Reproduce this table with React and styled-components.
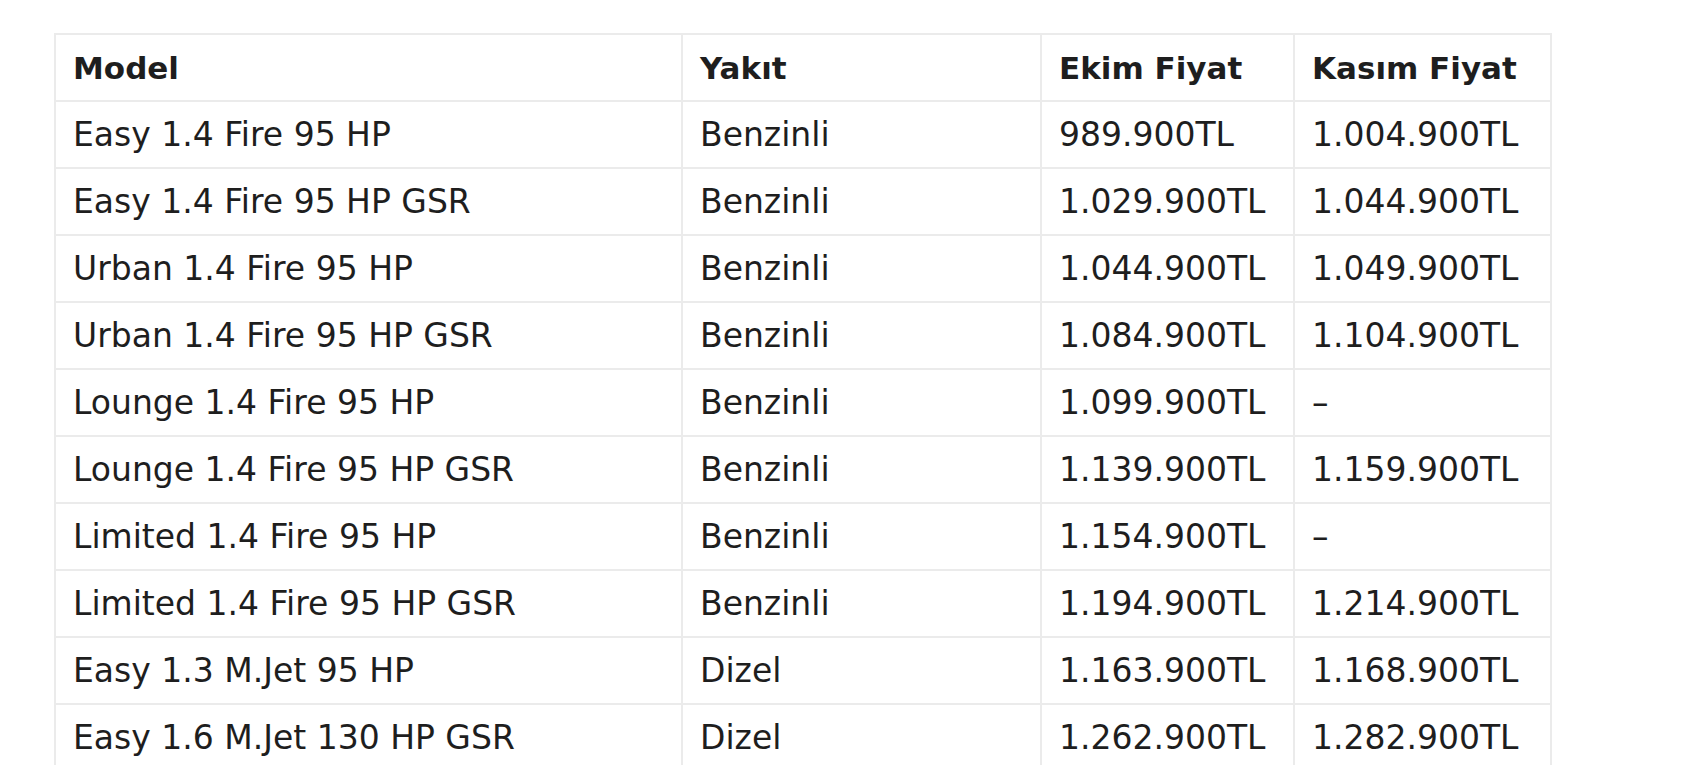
import React from "react";
import styled, { createGlobalStyle } from "styled-components";

const GlobalStyle = createGlobalStyle`
  html, body {
    margin: 0;
    padding: 0;
    background: #ffffff;
  }
  body {
    font-family: "DejaVu Sans", Verdana, sans-serif;
    color: #1e1e1e;
  }
`;

const Page = styled.div`
  padding: 33px 0 0 54px;
`;

const Table = styled.table`
  border-collapse: collapse;
  table-layout: fixed;
  width: 1496px;
  border: 2px solid #ebebeb;
`;

const Col = styled.col`
  width: ${(p) => p.$w}px;
`;

const Row = styled.tr`
  height: 67px;
`;

const HeadCell = styled.th`
  border: 2px solid #ebebeb;
  padding: 0 17px;
  text-align: left;
  font-weight: bold;
  font-size: 31px;
  white-space: nowrap;
  vertical-align: middle;
`;

const Cell = styled.td`
  border: 2px solid #ebebeb;
  padding: 0 17px;
  text-align: left;
  font-size: 33px;
  white-space: nowrap;
  vertical-align: middle;
`;

const rows = [
  ["Easy 1.4 Fire 95 HP", "Benzinli", "989.900TL", "1.004.900TL"],
  ["Easy 1.4 Fire 95 HP GSR", "Benzinli", "1.029.900TL", "1.044.900TL"],
  ["Urban 1.4 Fire 95 HP", "Benzinli", "1.044.900TL", "1.049.900TL"],
  ["Urban 1.4 Fire 95 HP GSR", "Benzinli", "1.084.900TL", "1.104.900TL"],
  ["Lounge 1.4 Fire 95 HP", "Benzinli", "1.099.900TL", "–"],
  ["Lounge 1.4 Fire 95 HP GSR", "Benzinli", "1.139.900TL", "1.159.900TL"],
  ["Limited 1.4 Fire 95 HP", "Benzinli", "1.154.900TL", "–"],
  ["Limited 1.4 Fire 95 HP GSR", "Benzinli", "1.194.900TL", "1.214.900TL"],
  ["Easy 1.3 M.Jet 95 HP", "Dizel", "1.163.900TL", "1.168.900TL"],
  ["Easy 1.6 M.Jet 130 HP GSR", "Dizel", "1.262.900TL", "1.282.900TL"],
];

export default function App() {
  return (
    <>
      <GlobalStyle />
      <Page>
        <Table>
          <colgroup>
            <Col $w={627} />
            <Col $w={359} />
            <Col $w={253} />
            <Col $w={257} />
          </colgroup>
          <thead>
            <Row>
              <HeadCell>Model</HeadCell>
              <HeadCell>Yakıt</HeadCell>
              <HeadCell>Ekim Fiyat</HeadCell>
              <HeadCell>Kasım Fiyat</HeadCell>
            </Row>
          </thead>
          <tbody>
            {rows.map((r, i) => (
              <Row key={i}>
                {r.map((c, j) => (
                  <Cell key={j}>{c}</Cell>
                ))}
              </Row>
            ))}
          </tbody>
        </Table>
      </Page>
    </>
  );
}
